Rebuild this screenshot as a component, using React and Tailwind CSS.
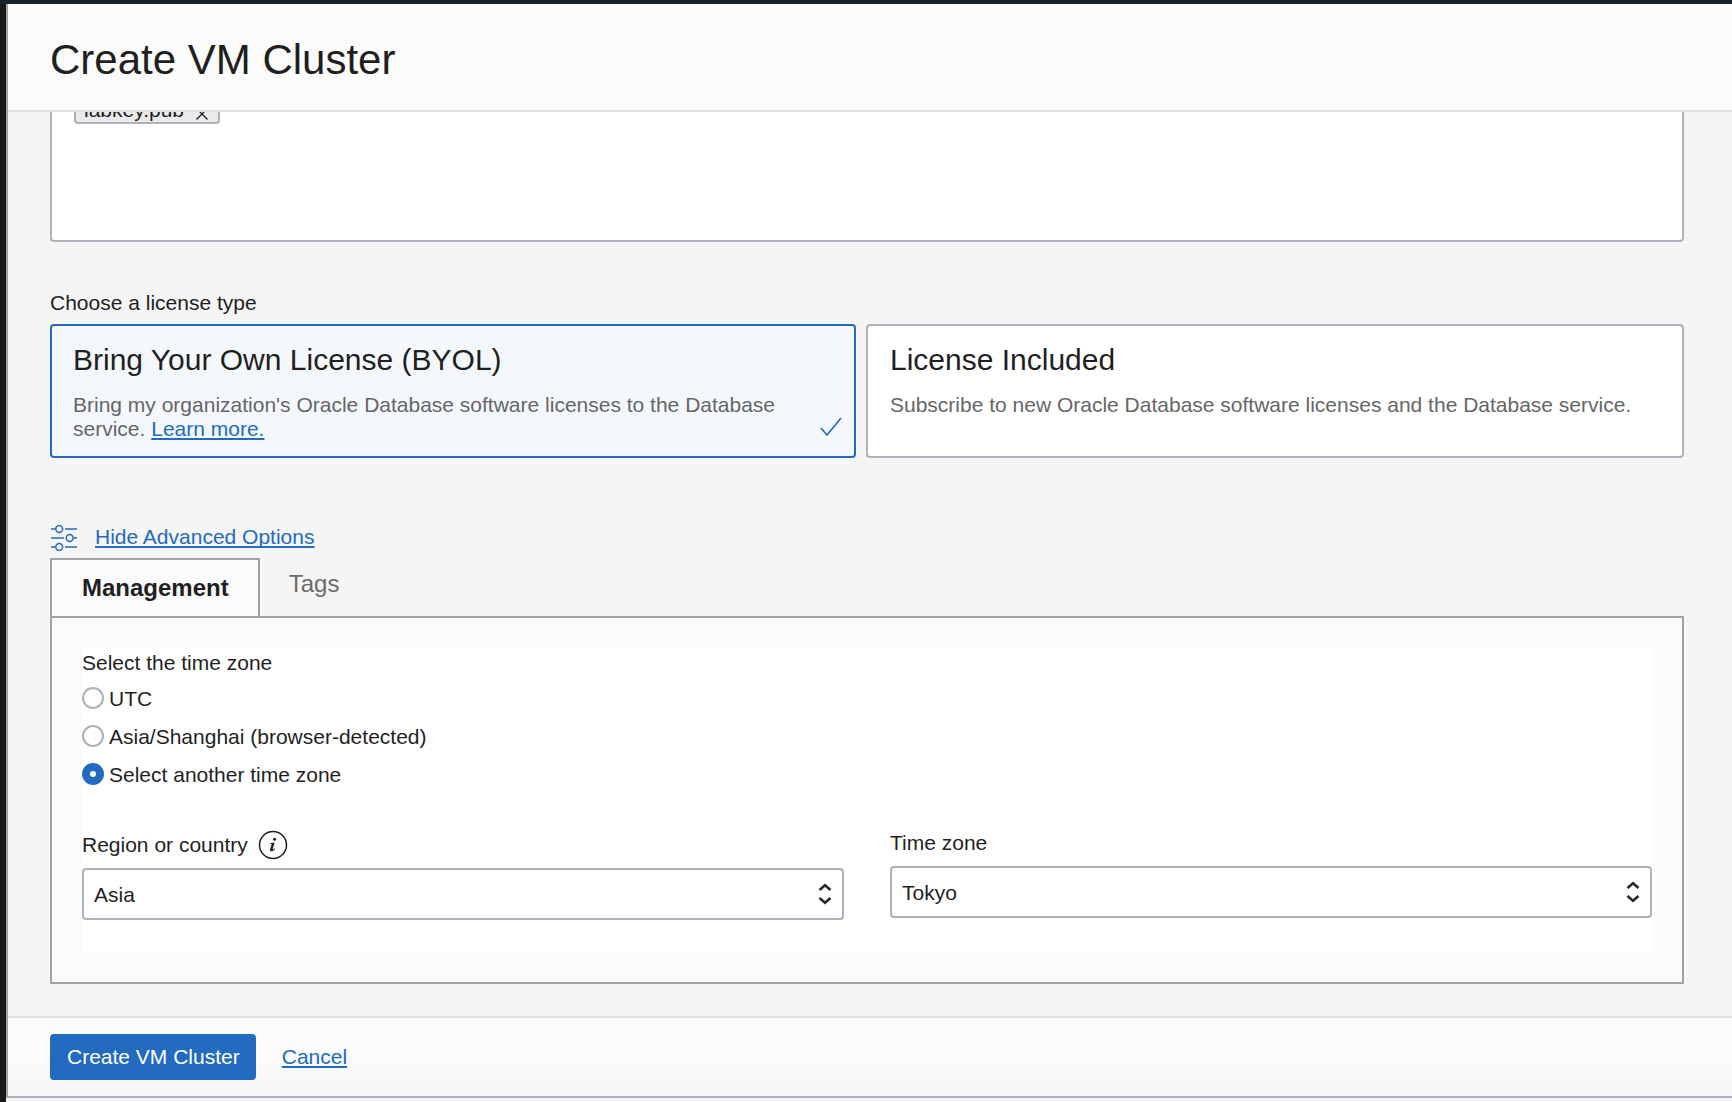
import { useState } from "react";

function Chevrons() {
  return (
    <svg
      className="pointer-events-none absolute top-1/2 right-3 h-[22px] w-[14px] -translate-y-1/2"
      viewBox="0 0 14 22"
      fill="none"
      stroke="#2b2b2b"
      strokeWidth="2.6"
      aria-hidden="true"
    >
      <path d="M1.500 7 7 2.200 12.500 7M1.500 15 7 19.800 12.500 15" />
    </svg>
  );
}

function SelectBox({ id, options }) {
  return (
    <div className="relative">
      <select
        id={id}
        className="block h-[52px] w-full appearance-none rounded-[4px] border-2 border-[#abb2b9] bg-white pt-0.5 pr-10 pl-[10px] text-[#1f1f1f]"
      >
        {options.map((o) => (
          <option key={o}>{o}</option>
        ))}
      </select>
      <Chevrons />
    </div>
  );
}

function SlidersIcon() {
  return (
    <svg
      className="h-[26px] w-[26px] shrink-0"
      viewBox="0 0 26 26"
      fill="none"
      stroke="#226bc0"
      strokeWidth="1.5"
      aria-hidden="true"
    >
      <path d="M0 4h4.700M14 4h12M0 13h13M22.300 13H26M0 22h4.700M14 22h12" />
      <circle cx="8.200" cy="4" r="3.400" />
      <circle cx="18.700" cy="13" r="3.400" />
      <circle cx="8.200" cy="22" r="3.400" />
    </svg>
  );
}

const zones = [
  { id: "utc", label: "UTC" },
  { id: "detected", label: "Asia/Shanghai (browser-detected)" },
  { id: "other", label: "Select another time zone" },
];

const linkClass =
  "text-[#226bc0] underline decoration-2 underline-offset-2 [text-decoration-skip-ink:none]";

export default function App() {
  const [zone, setZone] = useState("other");

  return (
    <div className="flex h-screen flex-col border-t-4 border-[#1a222e] bg-[#f3f3f3] font-['Liberation_Sans',Arial,sans-serif] text-[21px] leading-6 text-[#1f1f1f]">
      <div className="flex min-h-0 flex-1 border-l-[6px] border-[#1a1a1a] pb-1">
        <div className="flex min-w-0 flex-1 flex-col border-b-2 border-l-2 border-b-[#abb2b9] border-l-[#a5a29f] bg-[#f5f5f5]">
          <header className="shrink-0 border-b-2 border-[#dfdfdf] bg-[#fbfbfb] px-[42px] pt-8 pb-[26px]">
            <h1 className="text-[42px] leading-[48px]">Create VM Cluster</h1>
          </header>

          <main className="flex min-h-0 flex-1 flex-col justify-end overflow-hidden pr-12 pb-8 pl-[42px]">
            <div className="h-[180px] shrink-0 rounded-[4px] border-2 border-[#abb2b9] bg-white px-[22px] pt-[28px]">
              <span className="inline-flex items-center gap-3 rounded-[4px] border-2 border-[#abb2b9] bg-[#eaeaea] pt-1 pr-[10px] pl-2">
                labkey.pub
                <button type="button" aria-label="Remove labkey.pub" className="pt-2">
                  <svg className="h-3 w-3" viewBox="0 0 12 12" fill="none" stroke="#1f1f1f" strokeWidth="1.3">
                    <path d="M.5.5l11 11M11.500.5l-11 11" />
                  </svg>
                </button>
              </span>
            </div>

            <h2 className="mt-[49px]">Choose a license type</h2>
            <div className="mt-[9px] grid shrink-0 grid-cols-2">
              <div
                role="radio"
                aria-checked="true"
                tabIndex={0}
                className="mr-[11px] flex items-end rounded-[4px] border-2 border-[#226bc0] bg-[#f4f8fd] pt-4 pr-3 pb-[15px] pl-[21px]"
              >
                <div className="min-w-0 flex-1">
                  <h3 className="text-[30px] leading-9">Bring Your Own License (BYOL)</h3>
                  <p className="mt-[15px] text-[#666666]">
                    Bring my organization's Oracle Database software licenses to the Database service.{" "}
                    <a href="#learn" className={linkClass}>Learn more.</a>
                  </p>
                </div>
                <svg className="mb-1 h-5 w-[22px] shrink-0" viewBox="0 0 22 20" fill="none" stroke="#226bc0" strokeWidth="1.7" aria-hidden="true">
                  <path d="M1 11l6 7L21 1" />
                </svg>
              </div>
              <div
                role="radio"
                aria-checked="false"
                tabIndex={0}
                className="-ml-px rounded-[4px] border-2 border-[#abb2b9] bg-white px-[22px] pt-4 pb-[15px]"
              >
                <h3 className="text-[30px] leading-9">License Included</h3>
                <p className="mt-[15px] text-[#666666]">
                  Subscribe to new Oracle Database software licenses and the Database service.
                </p>
              </div>
            </div>

            <div className="mt-[67px] flex gap-[18px] pl-px">
              <SlidersIcon />
              <a href="#advanced" className={linkClass}>Hide Advanced Options</a>
            </div>

            <div role="tablist" className="mt-[7px] flex h-[58px] shrink-0 text-2xl leading-7">
              <button
                type="button"
                role="tab"
                aria-selected="true"
                className="border-2 border-b-0 border-[#a2a2a2] bg-[#fbfbfb] pr-[29px] pl-[30px] font-bold"
              >
                Management
              </button>
              <button type="button" role="tab" aria-selected="false" className="px-[29px] pb-1.5 text-[#6b6b6b]">
                Tags
              </button>
            </div>
            <section className="shrink-0 border-2 border-[#a2a2a2] bg-[#fbfbfb] p-[30px]">
              <div className="bg-white pt-[3px] pb-8">
                <fieldset>
                  <legend>Select the time zone</legend>
                  <div className="mt-3 flex flex-col gap-[14px]">
                    {zones.map((z) => (
                      <label key={z.id} className="flex items-start gap-[5px]">
                        <input
                          type="radio"
                          name="zone"
                          checked={zone === z.id}
                          onChange={() => setZone(z.id)}
                          className="h-[22px] w-[22px] appearance-none rounded-full border-2 border-[#abb2b9] bg-white checked:border-8 checked:border-[#226bc0]"
                        />
                        {z.label}
                      </label>
                    ))}
                  </div>
                </fieldset>

                <div className="mt-11 grid grid-cols-2 gap-[46px]">
                  <div>
                    <div className="mb-[9px] flex h-7 items-center gap-[10px]">
                      <label htmlFor="region">Region or country</label>
                      <button type="button" aria-label="About region or country">
                        <svg className="h-[30px] w-[30px]" viewBox="0 0 30 30" aria-hidden="true">
                          <circle cx="15" cy="15" r="13.500" fill="none" stroke="#1f1f1f" strokeWidth="1.500" />
                          <circle cx="16.600" cy="9.300" r="1.500" fill="#1f1f1f" />
                          <path
                            d="M12 13.200l4.700-.7-2 6.600c-.2.800.5.700 1.900-.9l.6.500c-1.400 2-2.500 2.600-3.800 2.600-1.200 0-1.700-.8-1.300-2.100l1.500-4.700c.1-.5-.3-.7-1.600-.7z"
                            fill="#1f1f1f"
                          />
                        </svg>
                      </button>
                    </div>
                    <SelectBox id="region" options={["Asia", "Europe", "America"]} />
                  </div>
                  <div>
                    <label htmlFor="tz" className="mb-[11px] block">Time zone</label>
                    <SelectBox id="tz" options={["Tokyo", "Shanghai", "Singapore"]} />
                  </div>
                </div>
              </div>
            </section>
          </main>

          <footer className="flex shrink-0 items-center gap-[26px] border-t-2 border-[#e0e0e0] bg-linear-to-b from-[#fcfcfc] from-40% to-[#f5f5f5] px-[42px] py-4">
            <button type="button" className="h-[46px] rounded-[4px] bg-[#226bc0] pr-4 pl-[17px] text-white">
              Create VM Cluster
            </button>
            <a href="#cancel" className={linkClass}>Cancel</a>
          </footer>
        </div>
      </div>
    </div>
  );
}
